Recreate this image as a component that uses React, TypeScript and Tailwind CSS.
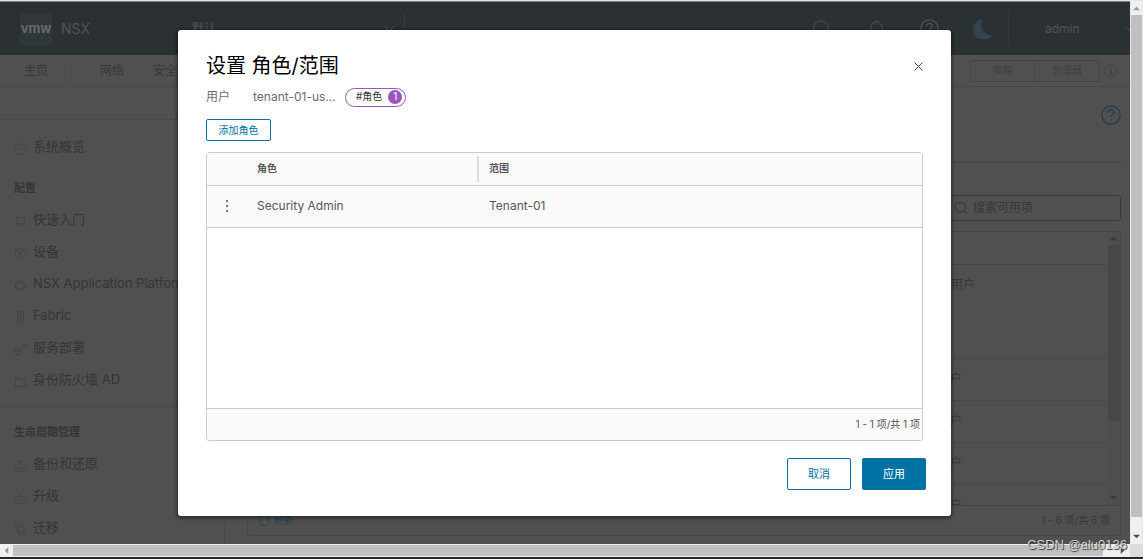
import type { ReactNode } from 'react'

const navItems = ['主页', '网络', '安全']

interface SideItem {
  label: string
  icon: ReactNode
}

const configItems: SideItem[] = [
  { label: '快速入门', icon: <path d="M3 4h12v8H3zM1 14.5h16M5 12v2" /> },
  { label: '设备', icon: <path d="M9 2l7 3v8l-7 3-7-3V5zM2 5l7 3 7-3M9 8v8" /> },
  {
    label: 'NSX Application Platform',
    icon: (
      <>
        <circle cx="9" cy="9" r="4.5" />
        <circle cx="9" cy="9" r="7" strokeDasharray="3 1.4" strokeWidth="2" />
      </>
    ),
  },
  { label: 'Fabric', icon: <path d="M5 1h8v16H5zM5 5h8M7 3h4M7 9h4M9 9v4M7 13h4" /> },
  { label: '服务部署', icon: <path d="M6 7l5 2v5l-5 3-5-3V9zM1 9l5 2 5-2M6 11v6M11 7l6-6M12 1h5v5" /> },
  { label: '身份防火墙 AD', icon: <path d="M2 16V3h5l2 3h7v10zM2 6h7" /> },
]

const lifecycleItems: SideItem[] = [
  { label: '备份和还原', icon: <path d="M5 8H3l-2 5v4h16v-4l-2-5h-2M4 13h10M9 11V2M6 5l3-3 3 3" /> },
  { label: '升级', icon: <path d="M5 8H3l-2 5v4h16v-4l-2-5h-2M4 13h10M9 2v8M6 7l3 3 3-3" /> },
  { label: '迁移', icon: <path d="M5 6h9v7H5zM1 3h12M3 1L1 3l2 2M17 16H5M15 14l2 2-2 2" /> },
]

// extra left padding belongs to the taller first row
const userRows = [
  { cell: 'h-[94px] pl-[13px]' },
  { cell: 'h-[42px]' },
  { cell: 'h-[42px]' },
  { cell: 'h-[42px]' },
  { cell: 'h-[42px]' },
]

function Icon({ children, className }: { children: ReactNode; className: string }) {
  return (
    <svg viewBox="0 0 18 18" fill="none" stroke="currentColor" strokeWidth="1" className={`shrink-0 ${className}`} aria-hidden="true">
      {children}
    </svg>
  )
}

function Triangle({ d, className }: { d: string; className: string }) {
  return (
    <svg viewBox="0 0 8 8" fill="currentColor" className={className} aria-hidden="true">
      <path d={d} />
    </svg>
  )
}

function Question({ className }: { className: string }) {
  return (
    <Icon className={className}>
      <circle cx="9" cy="9" r="8.2" strokeWidth="1.2" />
      <path d="M6.3 6.8c0-3.6 5.6-3.2 5.4-.2C11.6 8.5 9 8.4 9 10.8M9 12.5v1.3" strokeWidth="1.2" />
    </Icon>
  )
}

function TopBar() {
  return (
    <header className="flex h-[53px] shrink-0 items-center overflow-hidden bg-[#2b3033] text-[#505456]">
      <div className="ml-5 flex size-8 items-center justify-center rounded-sm bg-[#30373a] text-[13px] font-bold text-[#666a6c]">
        vmw
      </div>
      <span className="ml-[9px] text-sm">NSX</span>
      <button className="ml-[102px] flex h-8 w-[213px] items-center justify-between border-r border-[#363c3f] pr-[9px] text-xs">
        默认
        <Icon className="size-3">
          <path d="M2 5l7 7 7-7" strokeWidth="1.5" />
        </Icon>
      </button>
      <div className="ml-auto flex items-center">
        <button aria-label="search" className="mr-[38px]">
          <Icon className="size-[17px]">
            <circle cx="8.5" cy="8.5" r="7.7" />
            <path d="M14 14l4 4" />
          </Icon>
        </button>
        <button aria-label="notifications" className="mr-[35px]">
          <Icon className="size-[17px]">
            <path d="M3 14V8a6 6 0 0 1 12 0v6l1 1H2zM9 2V0M7 16.5h4" />
          </Icon>
        </button>
        <button aria-label="help" className="mr-[22px] flex items-center gap-1">
          <Question className="size-[19px]" />
          <Icon className="size-[7px]">
            <path d="M2 5l7 7 7-7" strokeWidth="2" />
          </Icon>
        </button>
        <button aria-label="dark mode" className="mr-4 text-[#34444e]">
          <svg viewBox="0 0 20 20" fill="currentColor" className="size-5">
            <path d="M10.5 0A11 11 0 0 0 20 16.5 10.5 10.5 0 1 1 10.5 0z" />
          </svg>
        </button>
        <button className="-mr-1 flex h-9 w-[126px] items-center justify-between border-l border-[#333a3d] pl-9 text-xs">
          admin
          <Icon className="size-2">
            <path d="M1 5l8 8 8-8" strokeWidth="2" />
          </Icon>
        </button>
      </div>
    </header>
  )
}

function NavBar() {
  return (
    <nav className="flex h-8 shrink-0 items-center border-b border-[#484848] text-xs text-[#383838]">
      <a href="#" className="ml-6 mr-[23px]">{navItems[0]}</a>
      <span className="mr-7 h-5 w-px bg-[#4c4c4c]" />
      <a href="#" className="mr-[29px]">{navItems[1]}</a>
      <a href="#">{navItems[2]}</a>
      <div className="ml-auto flex h-[22px] divide-x divide-[#454545] rounded-[3px] border border-[#454545] text-[10px] text-[#424242]">
        <button className="w-[64px]">策略</button>
        <button className="w-[64px]">管理器</button>
      </div>
      <Icon className="mr-3 ml-1 size-[14px] text-[#404040]">
        <circle cx="9" cy="9" r="8" />
        <path d="M7 8h2v5M6.5 13h5M9 4v2" strokeWidth="1.3" />
      </Icon>
    </nav>
  )
}

function SideList({ items }: { items: SideItem[] }) {
  return (
    <ul>
      {items.map((item) => (
        <li key={item.label}>
          <a href="#" className="flex h-8 items-center gap-[6px] whitespace-nowrap pl-[14px]">
            <Icon className="mt-[3px] size-[13px] text-[#424242]">{item.icon}</Icon>
            {item.label}
          </a>
        </li>
      ))}
    </ul>
  )
}

function Sidebar() {
  return (
    <aside className="w-[225px] shrink-0 overflow-hidden border-r border-[#484848] pr-[14px] text-[13px] text-[#353535]">
      <div className="mb-[11px] h-[33px] border-b border-[#494949]" />
      <SideList
        items={[{ label: '系统概览', icon: <path d="M4 16.5h10a8 8 0 1 0-10 0zM8 12l5-6M9 3v2M3 10h2M13 10h2" /> }]}
      />
      <h2 className="mt-[9px] h-8 pl-[14px] text-[11px] leading-8 font-bold">配置</h2>
      <SideList items={configItems} />
      <hr className="mt-[10px] mb-[9px] border-[#484848]" />
      <h2 className="h-8 pl-[14px] text-[11px] leading-8 font-bold">生命周期管理</h2>
      <SideList items={lifecycleItems} />
    </aside>
  )
}

function UserPage() {
  return (
    <main className="flex min-w-0 flex-1 flex-col pr-[9px] pl-[22px] text-[#383838]">
      <div className="flex h-[76px] shrink-0 items-start justify-end border-b border-[#464646] pt-[18px]">
        <button aria-label="page help" className="text-[#2a3c47]">
          <Question className="size-5" />
        </button>
      </div>
      <label className="mt-8 ml-auto flex h-[26px] w-[172px] shrink-0 items-center gap-[5px] rounded-[3px] border border-[#3a3a3a] pl-1">
        <Icon className="size-[14px]">
          <circle cx="8" cy="8" r="6.5" strokeWidth="1.3" />
          <path d="M13 13l4 4" strokeWidth="1.3" />
        </Icon>
        <input placeholder="搜索可用项" className="w-full min-w-0 text-xs outline-none placeholder:text-[#383838]" />
      </label>
      <div className="mt-[10px] flex h-[305px] shrink-0 flex-col rounded-[3px] border border-[#464646]">
        <div className="flex min-h-0 flex-1">
          <div className="min-w-0 flex-1 overflow-hidden">
            <table className="w-full table-fixed text-left text-xs">
              <thead>
                <tr className="h-8 border-b border-[#464646]">
                  <th className="w-[690px]" />
                  <th />
                </tr>
              </thead>
              <tbody>
                {userRows.map((row, i) => (
                  <tr key={i} className="border-b border-[#4a4a4a]">
                    <td />
                    <td className={`pt-[10px] align-top leading-5 ${row.cell}`}>用户</td>
                  </tr>
                ))}
              </tbody>
            </table>
          </div>
          <div className="flex w-[13px] flex-col items-center bg-[#4e4e4e] text-[#383838]">
            <Triangle d="M0 6l4-4 4 4z" className="my-[3px] size-[7px]" />
            <div className="h-[176px] w-3 bg-[#474747]" />
            <Triangle d="M0 2l4 4 4-4z" className="mt-auto mb-1 size-[7px]" />
          </div>
        </div>
        <div className="flex h-[30px] items-center justify-between border-t border-[#464646] pr-[10px] pl-[11px] text-[10px]">
          <button className="flex items-center gap-1 text-[#25404f]">
            <Icon className="size-[11px]">
              <path d="M15 4a8 8 0 1 0 2 6M16 1v4h-5" strokeWidth="1.5" />
            </Icon>
            刷新
          </button>
          <span>1 - 6 项/共 6 项</span>
        </div>
      </div>
    </main>
  )
}

function RoleDialog() {
  return (
    <div className="absolute inset-0 flex items-center justify-center pr-px">
      <section
        role="dialog"
        aria-labelledby="dialog-title"
        className="w-[773px] rounded-[3px] bg-white pt-5 pb-[26px] text-[#565656] shadow-[0_1px_3px_2px_rgba(0,0,0,0.35)]"
      >
        <div className="px-7">
          <div className="flex h-8 items-center justify-between">
            <h1 id="dialog-title" className="text-xl text-black">设置 角色/范围</h1>
            <button aria-label="close" className="text-[#444]">
              <Icon className="size-[9px]">
                <path d="M1 1l16 16M17 1L1 17" strokeWidth="2" />
              </Icon>
            </button>
          </div>
          <div className="mt-[5px] flex h-5 items-center text-xs text-[#6b6b6b]">
            <span className="w-[47px]">用户</span>
            <span className="w-[92px]">tenant-01-us...</span>
            <span className="flex h-[19px] items-center gap-[6px] rounded-full border border-[#9b56bb] pr-[3px] pl-[10px] text-[10px] text-[#333]">
              #角色
              <span className="flex size-[14px] items-center justify-center rounded-full bg-[#9b56bb] text-white">1</span>
            </span>
          </div>
          <button className="mt-3 block h-[22px] w-[65px] rounded-[2px] border border-[#0072a3] text-[10px] text-[#0072a3]">
            添加角色
          </button>
          <div className="mt-[11px] flex h-[289px] flex-col rounded-[3px] border border-[#ccc]">
            <table className="w-full table-fixed text-left">
              <thead className="bg-[#fafafa] text-[10px]">
                <tr className="h-8 border-b border-[#ccc]">
                  <th className="w-[50px]" />
                  <th className="w-[222px] font-bold">
                    <div className="flex h-[26px] items-center border-r-2 border-[#ddd]">角色</div>
                  </th>
                  <th className="pl-[10px] font-bold">范围</th>
                </tr>
              </thead>
              <tbody className="bg-[#fafafa] text-xs">
                <tr className="h-[42px] border-b border-[#ccc]">
                  <td>
                    <button aria-label="row actions" className="ml-4 block text-[#777]">
                      <svg viewBox="0 0 8 16" fill="currentColor" className="h-4 w-2">
                        <circle cx="4" cy="3" r="1.2" />
                        <circle cx="4" cy="8" r="1.2" />
                        <circle cx="4" cy="13" r="1.2" />
                      </svg>
                    </button>
                  </td>
                  <td>Security Admin</td>
                  <td className="pl-[10px]">Tenant-01</td>
                </tr>
              </tbody>
            </table>
            <div className="mt-auto flex h-8 items-center justify-end rounded-b-[3px] border-t border-[#ccc] bg-[#fafafa] pr-[2px] text-[10px]">
              1 - 1 项/共 1 项
            </div>
          </div>
        </div>
        <div className="mt-[17px] flex justify-end gap-[11px] pr-[25px] text-[11px]">
          <button className="h-8 w-16 rounded-[2px] border border-[#0072a3] text-[#0072a3]">取消</button>
          <button className="h-8 w-16 rounded-[2px] bg-[#0072a3] text-white">应用</button>
        </div>
      </section>
    </div>
  )
}

export default function App() {
  return (
    <div className="relative flex h-screen flex-col overflow-hidden border-t border-b-2 border-t-[#e4e8e6] border-b-[#242629] bg-[#f0f0f0] font-['Inter','Noto_Sans_CJK_SC',sans-serif]">
      <div className="flex min-h-0 flex-1">
        <div className="relative flex min-w-0 flex-1 flex-col overflow-hidden border-t border-[#777b7a] bg-[#505050]">
          <TopBar />
          <NavBar />
          <div className="flex min-h-0 flex-1">
            <Sidebar />
            <UserPage />
          </div>
          <RoleDialog />
        </div>
        <div className="flex w-[13px] flex-col items-center border-x border-[#e8e8e8] pt-1 text-[#999]">
          <Triangle d="M0 6l4-4 4 4z" className="mb-[3px] size-[7px]" />
          <div className="w-full flex-1 bg-[#c0c0c0]" />
          <Triangle d="M0 2l4 4 4-4z" className="mt-4 mb-1 size-[7px] text-[#505050]" />
        </div>
      </div>
      <div className="flex h-[13px] shrink-0 items-center text-[#999]">
        <Triangle d="M6 0L2 4l4 4z" className="mx-[3px] size-[7px]" />
        <div className="h-[11px] flex-1 bg-[#c0c0c0]" />
        <Triangle d="M2 0l4 4-4 4z" className="mr-1 ml-4 size-[7px] text-[#505050]" />
        <div className="h-full w-[13px] bg-[#dcdcdc]" />
      </div>
      <div className="absolute right-4 bottom-1 font-['Liberation_Sans',sans-serif] text-[13px] leading-4 text-[#d0d0d0] [text-shadow:1px_1px_1px_#333]">
        CSDN @alu0136
      </div>
    </div>
  )
}
